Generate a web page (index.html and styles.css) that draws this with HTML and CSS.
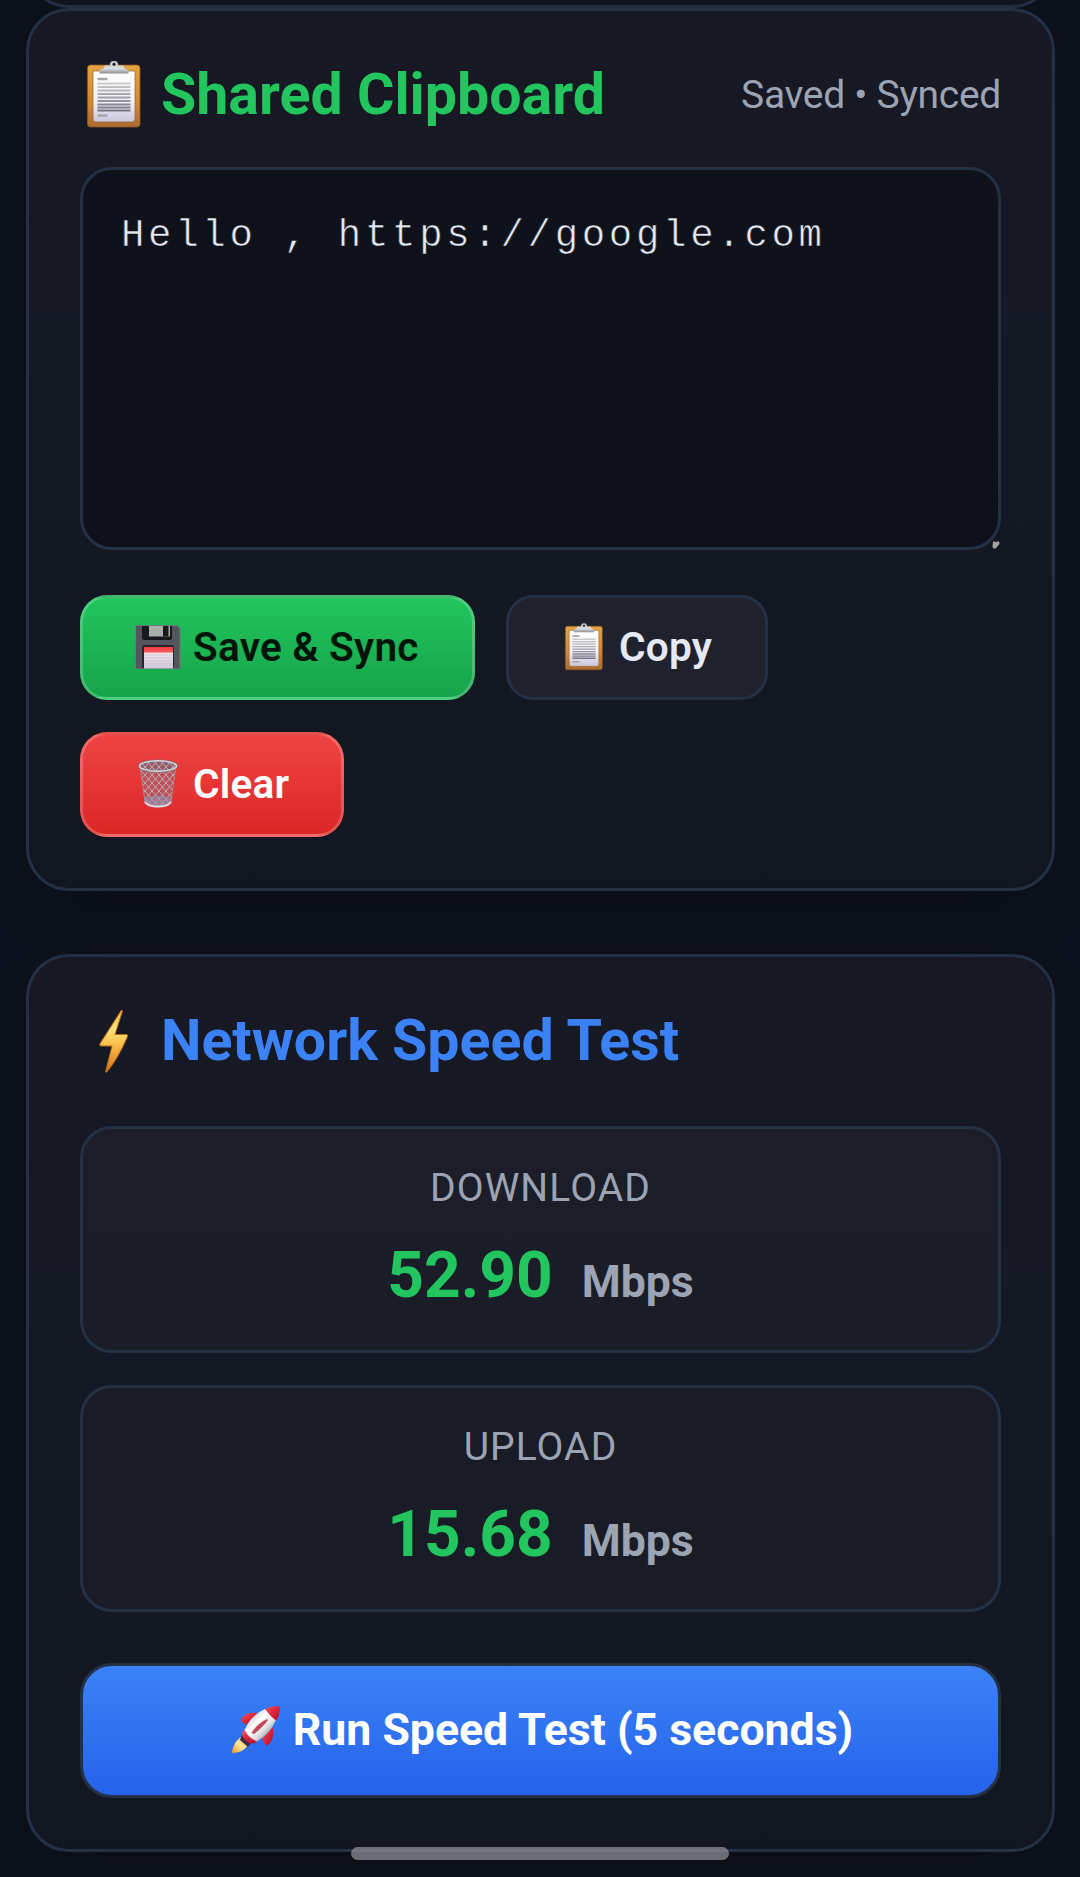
FILE: index.html
```html
<!DOCTYPE html>
<html lang="en">
<head>
<meta charset="utf-8">
<meta name="viewport" content="width=device-width">
<title>Shared Clipboard</title>
<link rel="stylesheet" href="styles.css">
</head>
<body>
<svg class="defs" width="0" height="0" aria-hidden="true">
  <defs>
    <linearGradient id="wood" x1="0" y1="0" x2="0" y2="1"><stop offset="0" stop-color="#e5a443"/><stop offset=".6" stop-color="#cf8a30"/><stop offset="1" stop-color="#ad6a32"/></linearGradient>
    <linearGradient id="paper" x1="0" y1="0" x2="0" y2="1"><stop offset="0" stop-color="#fff"/><stop offset=".6" stop-color="#f1f0f5"/><stop offset="1" stop-color="#c9c6dc"/></linearGradient>
    <linearGradient id="clip" x1="0" y1="0" x2="0" y2="1"><stop offset="0" stop-color="#b9babd"/><stop offset=".6" stop-color="#dedfe2"/><stop offset="1" stop-color="#8d8e92"/></linearGradient>
    <linearGradient id="rules" x1="0" y1="20" x2="0" y2="51" gradientUnits="userSpaceOnUse"><stop offset="0" stop-color="#d2d2d2"/><stop offset="1" stop-color="#73717f"/></linearGradient>
    <linearGradient id="bolt" x1="0" y1="0" x2="0" y2="1"><stop offset="0" stop-color="#f6b73c"/><stop offset=".3" stop-color="#ffe17a"/><stop offset=".55" stop-color="#fbc04c"/><stop offset="1" stop-color="#d96d12"/></linearGradient>
    <linearGradient id="label" x1="0" y1="0" x2="0" y2="1"><stop offset="0" stop-color="#f23b40"/><stop offset=".22" stop-color="#f5595c"/><stop offset=".3" stop-color="#f4e4e9"/><stop offset="1" stop-color="#cfc9dc"/></linearGradient>
    <linearGradient id="body" x1=".2" y1=".2" x2=".8" y2=".8"><stop offset="0" stop-color="#cfcfd2"/><stop offset=".35" stop-color="#fff"/><stop offset=".7" stop-color="#e3e3e6"/><stop offset="1" stop-color="#97979d"/></linearGradient>
    <linearGradient id="red" x1="0" y1="0" x2="1" y2="1"><stop offset="0" stop-color="#f55560"/><stop offset=".5" stop-color="#dd2438"/><stop offset="1" stop-color="#ad0a20"/></linearGradient>
    <linearGradient id="flame" x1="1" y1="0" x2="0" y2="1"><stop offset="0" stop-color="#f4a53a"/><stop offset=".5" stop-color="#ffe79a"/><stop offset="1" stop-color="#ef9a2a"/></linearGradient>
    <pattern id="mesh" width="7" height="8" patternUnits="userSpaceOnUse"><path d="M0 0L7 8M7 0L0 8" stroke="#b9aeb8" stroke-width="1" fill="none"/></pattern>
    <symbol id="clipboard" viewBox="0 0 54 67">
      <rect x=".5" y="4" width="52.5" height="62" rx="3" fill="url(#wood)" stroke="#8f5420" stroke-width=".8"/>
      <path d="M6 10h42v48q0 3-3 3H9q-3 0-3-3z" fill="url(#paper)" stroke="#98602a" stroke-width=".7"/>
      <path d="M10.500 18h10M10.500 54.500h10" stroke="#a9a4a8" stroke-width="2.400"/>
      <path d="M10.500 22.500h33M10.500 26h33M10.500 29.500h33M10.500 33h33M10.500 36.500h33M10.500 40h33M10.500 43.500h33M10.500 46.500h33M10.500 49.500h33" stroke="url(#rules)" stroke-width="1.900" fill="none"/>
      <path d="M12.500 12.500V9q5-1 5-4.500h5.500V3a4 3.200 0 0 1 8 0v1.500h5.500Q36.500 8 41.500 9v3.500z" fill="url(#clip)"/>
      <circle cx="27" cy="3.300" r="1.500" fill="#1a1a20"/>
    </symbol>
  </defs>
</svg>

<main class="page">
  <section class="card card-previous"></section>

  <section class="card card-clipboard">
    <header class="card-header">
      <h2 class="title title-green"><span class="title-icon"><svg width="54" height="67"><use href="#clipboard"/></svg></span><span>Shared Clipboard</span></h2>
      <span class="status">Saved • Synced</span>
    </header>
    <div class="editor" role="textbox" aria-multiline="true">Hello , https://google.com
      <svg class="grip" width="8" height="8" viewBox="0 0 8 8"><path d="M1 .5h2l1 1 1-1h2l.5 2.500-4 4.500H1.500L.5 6z" fill="#a5a5a7"/></svg>
    </div>
    <div class="actions">
      <button class="btn btn-save"><span class="btn-icon"><svg width="46" height="44" viewBox="0 0 46 44"><path d="M1 .5h41l3 3V44H.5V1z" fill="#55555d" stroke="#777781" stroke-width=".8"/><path d="M7 1h30v12q0 2-2 2H9q-2 0-2-2z" fill="#18191c"/><path d="M14 1h21v10.500H14z" fill="#a8b0aa"/><path d="M28 1h5.500v10.500H28z" fill="#17191c"/><path d="M7 43V22q0-2 2-2h28q2 0 2 2v21z" fill="#25252b"/><path d="M9 22h29v21.500H9z" fill="url(#label)"/><path d="M9 30h29M9 33h29M9 36h29M9 39h29" stroke="#c5bdca" stroke-width=".7"/></svg></span><span>Save &amp; Sync</span></button>
      <button class="btn btn-copy"><span class="btn-icon"><svg width="38" height="48"><use href="#clipboard"/></svg></span><span>Copy</span></button>
      <button class="btn btn-clear"><span class="btn-icon"><svg width="40" height="50" viewBox="0 0 40 50"><path d="M2 7l5 36q2 5 13 5t13-5l5-36z" fill="#8f7280" fill-opacity=".45"/><path d="M2 7l5 36q2 5 13 5t13-5l5-36z" fill="url(#mesh)" stroke="#a88791" stroke-width="1"/><path d="M6 39q14-5 28 0l-1 5q-3 4-13 4T7 44z" fill="#9294b5" fill-opacity=".6"/><path d="M7 43q3 4.500 13 4.500T33 43" fill="none" stroke="#ddd3de" stroke-width="2"/><ellipse cx="20" cy="7" rx="18.500" ry="5.200" fill="#9a5966" stroke="#77757c" stroke-width="2.800"/><ellipse cx="20" cy="7" rx="18.500" ry="5.200" fill="url(#mesh)" stroke="#ddd7dc" stroke-width="1.400"/></svg></span><span>Clear</span></button>
    </div>
  </section>

  <section class="card card-speed">
    <header class="card-header">
      <h2 class="title title-blue"><span class="title-icon"><svg width="30" height="64" viewBox="0 0 30 64"><path d="M22.500 1L.8 35Q.3 37 2 37H13L6.500 63l1 .3Q19 50 28.500 27.500 29 25.500 27.500 25.500H16L23.500 2z" fill="url(#bolt)" stroke="#b9681c" stroke-width="1" stroke-linejoin="round"/></svg></span><span>Network Speed Test</span></h2>
    </header>
    <div class="stats">
      <div class="stat">
        <div class="stat-label">DOWNLOAD</div>
        <div class="stat-value"><span>52.90</span><span class="unit">Mbps</span></div>
      </div>
      <div class="stat">
        <div class="stat-label">UPLOAD</div>
        <div class="stat-value"><span>15.68</span><span class="unit">Mbps</span></div>
      </div>
    </div>
    <button class="run"><span class="run-icon"><svg width="50" height="50" viewBox="0 0 50 50"><path d="M10 32Q3 36 1 47q0 1 1 1 11-1 15-8z" fill="url(#flame)"/><path d="M27 8Q14 6 10 15q0 2 2 2.500l3 2.500z" fill="url(#red)"/><path d="M42 22q2 12-5 18-2 1-3-1l-3-5z" fill="url(#red)"/><path d="M11 30l9 8-3 4-8-7z" fill="#3b2c4c"/><path d="M13.500 24Q10 28 12 32q4 6 9 6.500 3 0 5.500-2.500z" fill="url(#red)"/><path d="M34 4Q20 10 13.500 25q4 8 12.500 11.500Q39 29 45 15 42 7 34 4z" fill="url(#body)"/><path d="M34 4q6-3 13-3 2 0 2 2 0 7-4 12.500Q40 12 34 4z" fill="url(#red)"/><path d="M36 14q-9 4-15 13-.5 2 2 2Q32 22 37 15z" fill="#c5485a"/></svg></span><span>Run Speed Test (5 seconds)</span></button>
  </section>
</main>
<div class="home-bar"></div>
</body>
</html>
```
FILE: styles.css
```css
* { box-sizing: border-box; }

html, body { height: 1877px; overflow: hidden; }

body {
  margin: 0;
  background: #0e131f;
  color: #e5e9f3;
  font-family: Roboto, sans-serif;
}

.defs { display: block; }

.page {
  display: flex;
  flex-direction: column;
  padding: 0 25px 0 26px;
}

.card {
  flex: none;
  border: 3px solid #243044;
  border-radius: 43px;
  padding: 43px 51px;
  background: linear-gradient(#171823, #151925 35%, #111620);
  box-shadow: 0 27px 80px rgba(0, 0, 0, .3);
}

.card-previous { height: 100px; margin-top: -92px; background: #111620; }
.card-clipboard { height: 883px; margin-bottom: 63px; }
.card-speed { height: 898px; }

.card-header {
  display: flex;
  align-items: center;
  justify-content: space-between;
  height: 81px;
}

.title {
  display: flex;
  align-items: center;
  gap: 14px;
  margin: 0;
  font-size: 57.3px;
  line-height: 81px;
  font-weight: 700;
  white-space: nowrap;
}
.title-green { color: #22c55e; }
.title-blue { color: #3b82f6; }
.title-icon { display: flex; justify-content: center; width: 67px; }

.status { color: #9ca3b3; font-size: 39px; line-height: 60px; letter-spacing: -.3px; white-space: nowrap; }

.editor {
  position: relative;
  height: 383px;
  margin-top: 32px;
  padding: 38px 38px 30px;
  border: 3px solid #243044;
  border-radius: 32px;
  background: linear-gradient(#0f121a, #0d1018);
  font-family: "Liberation Mono", monospace;
  font-size: 39px;
  line-height: 56px;
  letter-spacing: 3.7px;
  -webkit-text-stroke: .6px #0f121a;
  white-space: nowrap;
}
.grip { position: absolute; right: -2px; bottom: -2px; }

.actions {
  display: flex;
  flex-wrap: wrap;
  gap: 32px 31px;
  margin-top: 45px;
}

.btn {
  display: flex;
  align-items: center;
  gap: 8px;
  height: 105px;
  padding: 0 0 2px 48px;
  border: 3px solid rgba(255, 255, 255, .2);
  border-radius: 27px;
  font: 600 40.6px/60px Roboto, sans-serif;
  letter-spacing: .2px;
  white-space: nowrap;
}
.btn-icon { display: flex; justify-content: center; width: 54px; }
.btn-save { width: 395px; color: #03150a; background-image: linear-gradient(#22c55e, #16a34a); }
.btn-copy { width: 262px; color: #e5e9f3; background: #1f222c; border-color: #243044; }
.btn-clear { width: 264px; color: #fff; background-image: linear-gradient(#ef4444, #dc2626); }

.stats {
  display: flex;
  flex-direction: column;
  gap: 32px;
  margin-top: 45px;
}

.stat {
  height: 227px;
  padding-top: 30px;
  border: 3px solid #243044;
  border-radius: 32px;
  background: linear-gradient(#1c1d29, #191d27);
  text-align: center;
}
.stat + .stat { background: #191c26; }

.stat-label {
  color: #9ca3b3;
  font-size: 39px;
  line-height: 59px;
  letter-spacing: 1.1px;
}

.stat-value {
  display: flex;
  align-items: baseline;
  justify-content: center;
  gap: 29px;
  margin-top: 13px;
  color: #22c55e;
  font-size: 64px;
  line-height: 89px;
  font-weight: 700;
}
.unit { color: #9ca3b3; font-size: 44.6px; }

.run {
  display: flex;
  align-items: center;
  justify-content: center;
  gap: 9px;
  width: 100%;
  height: 135px;
  margin-top: 51px;
  padding: 0 0 2px;
  border: 3px solid #243044;
  border-radius: 32px;
  background: linear-gradient(#3b82f6, #2563eb);
  color: #fff;
  font: 700 44.6px/60px Roboto, sans-serif;
  white-space: nowrap;
}
.run-icon { display: flex; justify-content: center; width: 56px; }

/* System gesture bar floating over the page */
.home-bar {
  position: absolute;
  left: 351px;
  top: 1847px;
  width: 378px;
  height: 13px;
  border-radius: 7px;
  background: rgba(139, 141, 148, .75);
}
```
